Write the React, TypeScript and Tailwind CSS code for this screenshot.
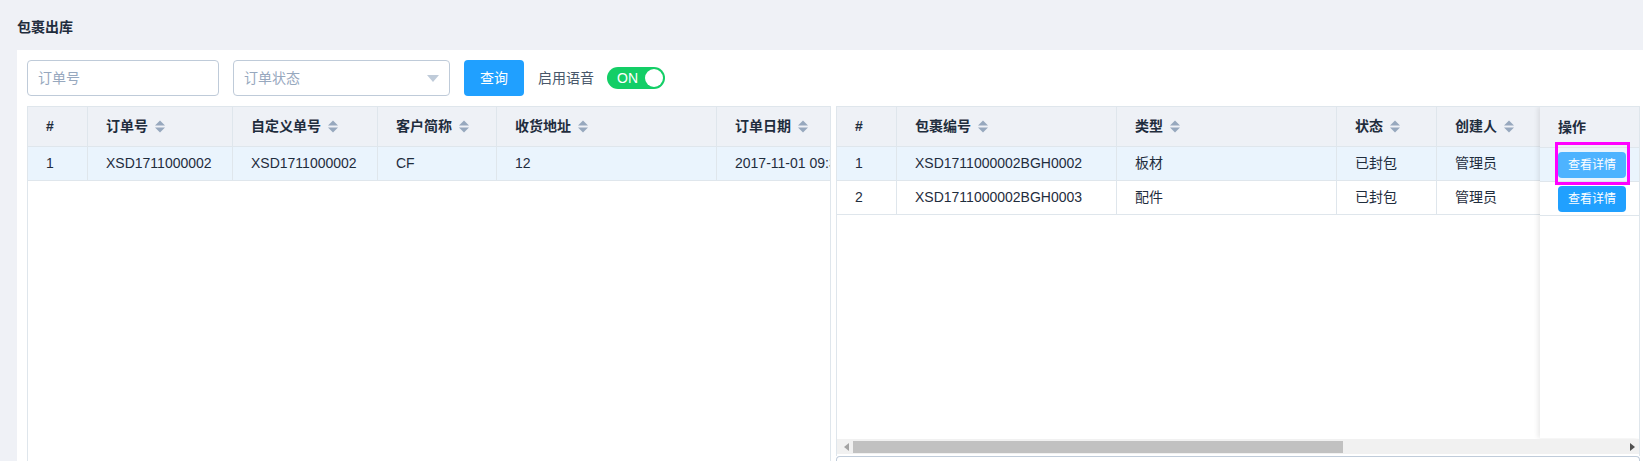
import type { ReactNode } from 'react'

const FONT = '[font-family:"Liberation_Sans","Noto_Sans_CJK_SC",sans-serif]'

interface Col {
  key: string
  title: string
  width: number
  sortable?: boolean
}

const ORDER_COLS: Col[] = [
  { key: 'idx', title: '#', width: 60 },
  { key: 'no', title: '订单号', width: 145, sortable: true },
  { key: 'custom', title: '自定义单号', width: 145, sortable: true },
  { key: 'client', title: '客户简称', width: 119, sortable: true },
  { key: 'addr', title: '收货地址', width: 220, sortable: true },
  { key: 'date', title: '订单日期', width: 180, sortable: true },
]

const ORDER_ROWS = [
  {
    idx: '1',
    no: 'XSD1711000002',
    custom: 'XSD1711000002',
    client: 'CF',
    addr: '12',
    date: '2017-11-01 09:32:18',
  },
]

// the last column sits under the fixed 操作 overlay, so it stays blank here
const PACKAGE_COLS: Col[] = [
  { key: 'idx', title: '#', width: 60 },
  { key: 'code', title: '包裹编号', width: 220, sortable: true },
  { key: 'type', title: '类型', width: 220, sortable: true },
  { key: 'status', title: '状态', width: 100, sortable: true },
  { key: 'creator', title: '创建人', width: 180, sortable: true },
  { key: 'op', title: '', width: 100 },
]

const PACKAGE_ROWS = [
  { idx: '1', code: 'XSD1711000002BGH0002', type: '板材', status: '已封包', creator: '管理员', op: '' },
  { idx: '2', code: 'XSD1711000002BGH0003', type: '配件', status: '已封包', creator: '管理员', op: '' },
]

function SortIcon() {
  return (
    <svg width="10" height="13" viewBox="0 0 10 13" className="ml-[7px] inline-block shrink-0">
      <path d="M0 5.5 L5 0.5 L10 5.5 Z" fill="#97a8be" />
      <path d="M0 7.5 L5 12.5 L10 7.5 Z" fill="#97a8be" />
    </svg>
  )
}

function HeadCell({ col }: { col: Col }) {
  return (
    <th
      className="h-[40px] border-r border-b border-[#dfe6ec] bg-[#eef1f6] pl-[18px] text-left text-[14px] font-bold whitespace-nowrap text-[#1f2d3d]"
      style={{ width: col.width }}
    >
      <span className="flex items-center">
        {col.title}
        {col.sortable && <SortIcon />}
      </span>
    </th>
  )
}

function DataTable({ cols, rows }: { cols: Col[]; rows: Record<string, string>[] }) {
  const total = cols.reduce((sum, col) => sum + col.width, 0)
  return (
    <table className="table-fixed border-separate border-spacing-0" style={{ width: total }}>
      <thead>
        <tr>
          {cols.map((col) => (
            <HeadCell key={col.key} col={col} />
          ))}
        </tr>
      </thead>
      <tbody>
        {rows.map((row, i) => (
          <tr key={row.idx} className={i === 0 ? 'bg-[#eaf4fd]' : 'bg-white'}>
            {cols.map((col) => (
              <td
                key={col.key}
                className="h-[34px] overflow-hidden border-r border-b border-[#dfe6ec] pl-[18px] text-[14px] whitespace-nowrap text-[#1f2d3d]"
              >
                {row[col.key]}
              </td>
            ))}
          </tr>
        ))}
      </tbody>
    </table>
  )
}

function DetailButton({ hover, children }: { hover?: boolean; children: ReactNode }) {
  return (
    <button
      type="button"
      className={`h-[26px] w-[68px] rounded-[4px] text-[12px] text-white ${hover ? 'bg-[#4db3ff]' : 'bg-[#20a0ff]'}`}
    >
      {children}
    </button>
  )
}

function FixedOpColumn() {
  return (
    <div className="absolute top-0 right-0 h-[331px] w-[99px] bg-white shadow-[-2px_0_5px_rgba(0,0,0,0.09)]">
      <div className="flex h-[41px] items-center border-b border-[#dfe6ec] bg-[#eef1f6] pl-[18px] text-[14px] font-bold text-[#1f2d3d]">
        操作
      </div>
      {PACKAGE_ROWS.map((row, i) => (
        <div
          key={row.idx}
          className={`flex h-[34px] items-center border-b border-[#dfe6ec] pl-[18px] ${i === 0 ? 'bg-[#eaf4fd]' : 'bg-white'}`}
        >
          <DetailButton hover={i === 0}>查看详情</DetailButton>
        </div>
      ))}
      {/* annotation box around the hovered button */}
      <div className="pointer-events-none absolute top-[35px] left-[15px] h-[43px] w-[75px] border-[3px] border-[#f0f]" />
    </div>
  )
}

function ScrollBar() {
  return (
    <div className="absolute top-[332px] right-0 left-0 flex h-[15px] items-center bg-[#f1f1f1]">
      <svg width="5" height="8" viewBox="0 0 5 8" className="ml-[7px]">
        <path d="M5 0 L0 4 L5 8 Z" fill="#a3a3a3" />
      </svg>
      <div className="ml-[4px] h-[12px] w-[490px] bg-[#c1c1c1]" />
      <svg width="5" height="8" viewBox="0 0 5 8" className="mr-[4px] ml-auto">
        <path d="M0 0 L5 4 L0 8 Z" fill="#505050" />
      </svg>
    </div>
  )
}

export default function App() {
  return (
    <div className={`min-h-screen w-full overflow-hidden bg-[#eff1f6] ${FONT}`}>
      <div className="flex h-[50px] items-center pt-[4px] pl-[17px] text-[14px] font-bold text-[#1f2d3d]">
        包裹出库
      </div>

      <div className="ml-[17px] bg-white pt-[10px] pl-[10px]">
        <div className="flex h-[36px] items-center">
          <div className="flex h-[36px] w-[192px] items-center rounded-[4px] border border-[#bfcbd9] pl-[10px] text-[14px] text-[#97a8be]">
            订单号
          </div>
          <div className="ml-[14px] flex h-[36px] w-[217px] items-center justify-between rounded-[4px] border border-[#bfcbd9] pr-[10px] pl-[10px] text-[14px] text-[#97a8be]">
            订单状态
            <svg width="12" height="7" viewBox="0 0 12 7">
              <path d="M0 0 L12 0 L6 7 Z" fill="#bfcbd9" />
            </svg>
          </div>
          <button
            type="button"
            className="ml-[14px] h-[36px] w-[60px] rounded-[4px] bg-[#20a0ff] text-[14px] text-white"
          >
            查询
          </button>
          <span className="ml-[14px] text-[14px] text-[#48576a]">启用语音</span>
          <div className="ml-[13px] flex h-[22px] w-[58px] items-center justify-between rounded-full bg-[#13ce66] pr-[2px] pl-[10px]">
            <span className="text-[14px] leading-none text-white">ON</span>
            <span className="h-[18px] w-[18px] rounded-full bg-white" />
          </div>
        </div>

        <div className="mt-[10px] flex gap-[5px]">
          <div className="h-[400px] w-[804px] shrink-0 overflow-hidden border border-[#dfe6ec]">
            <DataTable cols={ORDER_COLS} rows={ORDER_ROWS} />
          </div>

          <div className="w-[804px] shrink-0">
            <div className="relative h-[350px] overflow-hidden border border-b-0 border-[#dfe6ec]">
              <DataTable cols={PACKAGE_COLS} rows={PACKAGE_ROWS} />
              <FixedOpColumn />
              <ScrollBar />
            </div>
            <div className="h-[20px] rounded-t-[4px] border border-b-0 border-[#c0ccda]" />
          </div>
        </div>
      </div>
    </div>
  )
}
